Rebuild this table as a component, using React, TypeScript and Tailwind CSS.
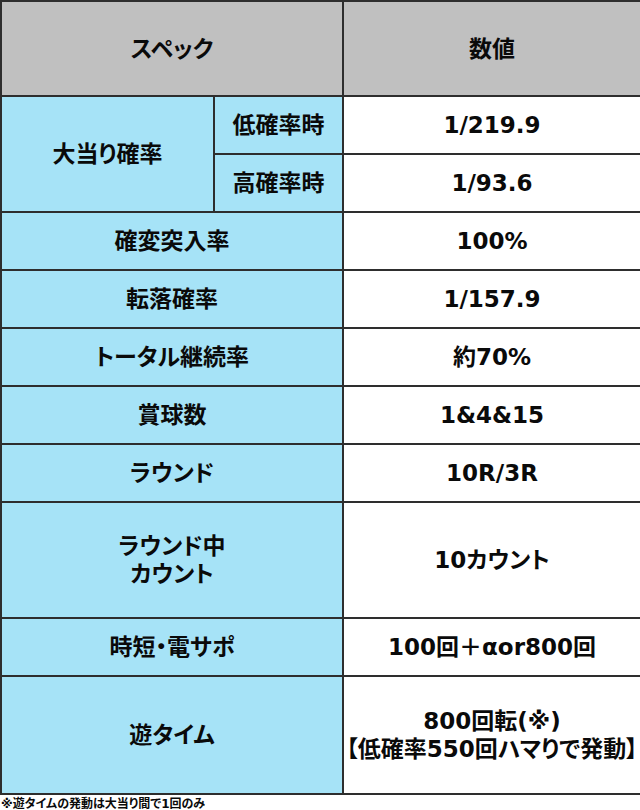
const font = { fontFamily: '"DejaVu Sans", "Noto Sans CJK JP", sans-serif' };

type Row = { label: React.ReactNode; value: React.ReactNode; h: string };

const rows: Row[] = [
  { label: "確変突入率", value: "100%", h: "h-[58px]" },
  { label: "転落確率", value: "1/157.9", h: "h-[58px]" },
  { label: "トータル継続率", value: "約70%", h: "h-[58px]" },
  { label: "賞球数", value: "1&4&15", h: "h-[58px]" },
  { label: "ラウンド", value: "10R/3R", h: "h-[58px]" },
  {
    label: (
      <>
        ラウンド中
        <br />
        カウント
      </>
    ),
    value: "10カウント",
    h: "h-[116px]",
  },
  { label: "時短・電サポ", value: "100回＋αor800回", h: "h-[58px]" },
  {
    label: "遊タイム",
    value: (
      <>
        800回転(※)
        <br />
        【低確率550回ハマりで発動】
      </>
    ),
    h: "h-[118px]",
  },
];

const cell = "border-2 border-[#2e2e2e] text-center align-middle";
const blue = "bg-[#a6e3f7]";

export default function App() {
  return (
    <div className="w-[640px] bg-white text-[#0a0a0a] [font-feature-settings:'palt']" style={font}>
      <table className="w-[640px] table-fixed border-collapse text-[23px] font-bold leading-[28px]">
        <colgroup>
          <col className="w-[213px]" />
          <col className="w-[129px]" />
          <col className="w-[298px]" />
        </colgroup>
        <tbody>
          <tr className="h-[95px]">
            <td colSpan={2} className={`${cell} bg-[#c0c0c0]`}>
              スペック
            </td>
            <td className={`${cell} bg-[#c0c0c0]`}>数値</td>
          </tr>
          <tr className="h-[58px]">
            <td rowSpan={2} className={`${cell} ${blue}`}>
              大当り確率
            </td>
            <td className={`${cell} ${blue}`}>低確率時</td>
            <td className={`${cell} bg-white`}>1/219.9</td>
          </tr>
          <tr className="h-[58px]">
            <td className={`${cell} ${blue}`}>高確率時</td>
            <td className={`${cell} bg-white`}>1/93.6</td>
          </tr>
          {rows.map((r, i) => (
            <tr key={i} className={r.h}>
              <td colSpan={2} className={`${cell} ${blue}`}>
                {r.label}
              </td>
              <td className={`${cell} bg-white`}>{r.value}</td>
            </tr>
          ))}
        </tbody>
      </table>
      <p className="pl-[1px] pt-[2px] text-[12px] font-bold leading-[14px]">
        ※遊タイムの発動は大当り間で1回のみ
      </p>
    </div>
  );
}
